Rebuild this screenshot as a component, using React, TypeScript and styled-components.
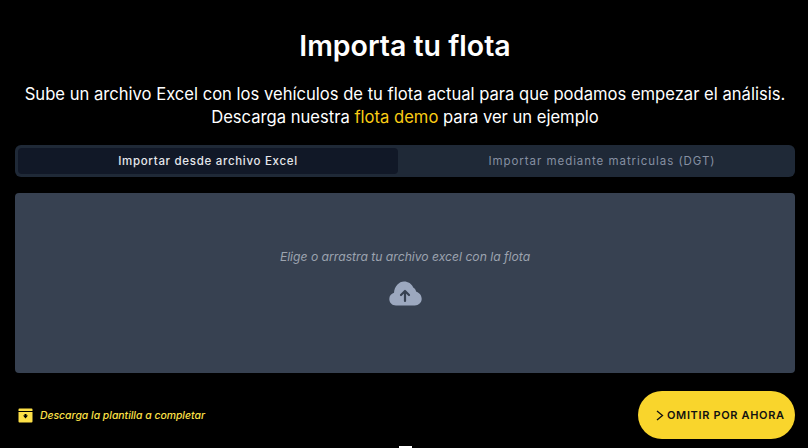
import React from "react";
import styled, { createGlobalStyle } from "styled-components";

const GlobalStyle = createGlobalStyle`
  html, body {
    margin: 0;
    padding: 0;
    width: 808px;
    height: 448px;
    overflow: hidden;
    background: #000000;
  }
`;

const Page = styled.main`
  position: relative;
  box-sizing: border-box;
  width: 808px;
  height: 448px;
  padding: 29px 13px 0 15px;
  display: flex;
  flex-direction: column;
  font-family: "Inter", "Liberation Sans", sans-serif;
  color: #ffffff;
`;

const Title = styled.h1`
  margin: 0;
  height: 34px;
  font-size: 28.5px;
  line-height: 34px;
  font-weight: 600;
  text-align: center;
`;

const Intro = styled.p`
  margin: 20px 0 0;
  font-size: 16.6px;
  line-height: 23px;
  font-weight: 400;
  text-align: center;
  white-space: nowrap;
`;

const DemoLink = styled.span`
  color: #facc15;
`;

const Tabs = styled.div`
  box-sizing: border-box;
  margin-top: 16px;
  height: 32px;
  padding: 3px;
  display: grid;
  grid-template-columns: 380px 1fr;
  gap: 14px;
  background: #1f2937;
  border-radius: 6px;
`;

const Tab = styled.div<{ $active?: boolean }>`
  display: flex;
  align-items: center;
  justify-content: center;
  border-radius: 4px;
  font-size: 11.5px;
  font-weight: ${(p) => (p.$active ? 500 : 400)};
  letter-spacing: ${(p) => (p.$active ? "0.7px" : "0.95px")};
  background: ${(p) => (p.$active ? "#111827" : "transparent")};
  color: ${(p) => (p.$active ? "#e5e7eb" : "#8690a2")};
`;

const DropZone = styled.section`
  margin-top: 16px;
  height: 180px;
  display: flex;
  flex-direction: column;
  align-items: center;
  background: #374151;
  border-radius: 4px;
`;

const DropText = styled.p`
  margin: 55px 0 0;
  font-size: 12.15px;
  line-height: 17px;
  font-style: italic;
  color: #9ca3af;
`;

const CloudIcon = styled.svg`
  display: block;
  margin-top: 16px;
  width: 33px;
  height: 25px;
`;

const Footer = styled.footer`
  margin-top: 18px;
  display: flex;
  align-items: center;
  justify-content: space-between;
`;

const TemplateLink = styled.div`
  display: flex;
  align-items: center;
  gap: 7px;
  margin-left: 3px;
  font-size: 10.4px;
  font-style: italic;
  font-weight: 500;
  color: #fde047;
`;

const ArchiveIcon = styled.svg`
  display: block;
  width: 15px;
  height: 15px;
`;

const SkipButton = styled.button`
  box-sizing: border-box;
  width: 157px;
  height: 48px;
  padding: 0 0 0 18px;
  display: flex;
  align-items: center;
  gap: 3px;
  border: none;
  border-radius: 24px;
  background: #f9d52c;
  color: #111111;
  font-family: inherit;
  font-size: 11px;
  font-weight: 600;
  letter-spacing: 0.65px;
  white-space: nowrap;
`;

const ChevronIcon = styled.svg`
  display: block;
  width: 8px;
  height: 11px;
`;

const EdgeMark = styled.div`
  position: absolute;
  left: 399px;
  bottom: 0;
  width: 13px;
  height: 2px;
  background: #ffffff;
`;

export default function App() {
  return (
    <Page>
      <GlobalStyle />
      <Title>Importa tu flota</Title>
      <Intro>
        Sube un archivo Excel con los vehículos de tu flota actual para que podamos empezar el análisis.
        <br />
        Descarga nuestra <DemoLink>flota demo</DemoLink> para ver un ejemplo
      </Intro>
      <Tabs>
        <Tab $active>Importar desde archivo Excel</Tab>
        <Tab>Importar mediante matriculas (DGT)</Tab>
      </Tabs>
      <DropZone>
        <DropText>Elige o arrastra tu archivo excel con la flota</DropText>
        <CloudIcon viewBox="0 0 33 25" aria-hidden="true">
          <path
            fill="#9ca8bf"
            d="M7 24.5C3 24.5 0.3 21.6 0.3 18C0.3 15 2.2 12.6 5 11.8C5.4 5.4 10 0.5 15 0.5C19.2 0.5 22.6 2.8 24.2 6.4C25.8 7.2 26.9 8.8 27 10.4C30.4 11.5 32.7 14.4 32.7 17.8C32.7 21.6 29.6 24.5 25.8 24.5Z"
          />
          <path
            fill="none"
            stroke="#374151"
            strokeWidth="2.2"
            strokeLinecap="round"
            strokeLinejoin="round"
            d="M16 20V10M12 14L16 10L20 14"
          />
        </CloudIcon>
      </DropZone>
      <Footer>
        <TemplateLink>
          <ArchiveIcon viewBox="0 0 15 15" aria-hidden="true">
            <path fill="#fde047" d="M1.5 0.5H13.5A1 1 0 0 1 14.5 1.5V3H0.5V1.5A1 1 0 0 1 1.5 0.5Z" />
            <path
              fill="#fde047"
              d="M0.5 4H14.5V13.5A1 1 0 0 1 13.5 14.5H1.5A1 1 0 0 1 0.5 13.5ZM5 7.5L7.5 10.5L10 7.5H8.5V6H6.5V7.5Z"
              fillRule="evenodd"
            />
          </ArchiveIcon>
          Descarga la plantilla a completar
        </TemplateLink>
        <SkipButton>
          <ChevronIcon viewBox="0 0 8 11" aria-hidden="true">
            <path fill="none" stroke="#111111" strokeWidth="1.3" d="M1 1L6.5 5.5L1 10" />
          </ChevronIcon>
          OMITIR POR AHORA
        </SkipButton>
      </Footer>
      <EdgeMark />
    </Page>
  );
}
